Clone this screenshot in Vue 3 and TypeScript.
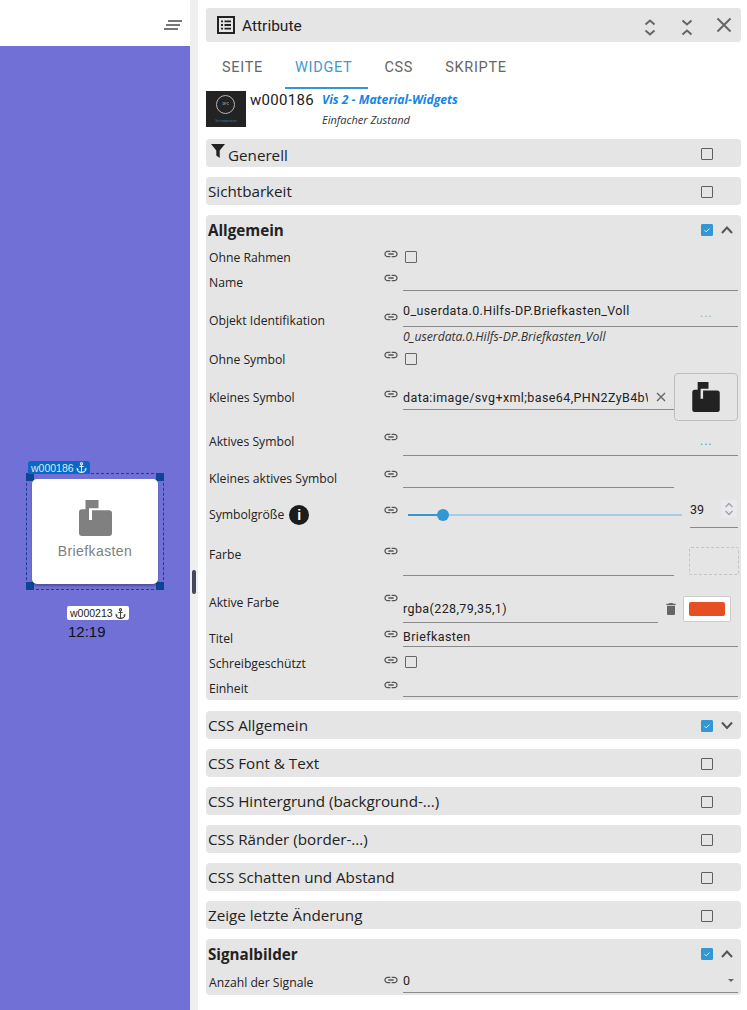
<script setup lang="ts">
interface Row {
  label: string
  kind: 'check' | 'text' | 'slider'
  h: number
  lt: number
  it: number
  fh?: number
  cbt?: number
  value?: string
  info?: boolean
  extra?: string
}
const rows: Row[] = [
  { label: 'Ohne Rahmen', kind: 'check', h: 25, lt: 4, it: 1, cbt: 6 },
  { label: 'Name', kind: 'text', h: 24, lt: 4, it: 0, fh: 21 },
  { label: 'Objekt Identifikation', kind: 'text', h: 52, lt: 18, it: 15, fh: 33, value: '0_userdata.0.Hilfs-DP.Briefkasten_Voll', extra: 'obj' },
  { label: 'Ohne Symbol', kind: 'check', h: 26, lt: 5, it: 1, cbt: 7 },
  { label: 'Kleines Symbol', kind: 'text', h: 50, lt: 17, it: 14, fh: 38, value: 'data:image/svg+xml;base64,PHN2ZyB4bW', extra: 'icon' },
  { label: 'Aktives Symbol', kind: 'text', h: 38, lt: 11, it: 7, fh: 34, extra: 'dotsrow' },
  { label: 'Kleines aktives Symbol', kind: 'text', h: 37, lt: 10, it: 6, fh: 28, extra: 'short' },
  { label: 'Symbolgröße', kind: 'slider', h: 35, lt: 9, it: 5, info: true },
  { label: 'Farbe', kind: 'text', h: 48, lt: 14, it: 11, fh: 44, extra: 'color' },
  { label: 'Aktive Farbe', kind: 'text', h: 45, lt: 14, it: 10, fh: 43, value: 'rgba(228,79,35,1)', extra: 'activecolor' },
  { label: 'Titel', kind: 'text', h: 25, lt: 5, it: 1, fh: 22, value: 'Briefkasten', extra: 'title' },
  { label: 'Schreibgeschützt', kind: 'check', h: 25, lt: 5, it: 2, cbt: 6 },
  { label: 'Einheit', kind: 'text', h: 25, lt: 5, it: 2, fh: 22 }
]
const tabs = ['SEITE', 'WIDGET', 'CSS', 'SKRIPTE']
const linkPath = 'M3.9 12c0-1.71 1.39-3.1 3.1-3.1h4V7H7c-2.76 0-5 2.24-5 5s2.24 5 5 5h4v-1.9H7c-1.71 0-3.1-1.39-3.1-3.1zM8 13h8v-2H8v2zm9-6h-4v1.9h4c1.71 0 3.1 1.39 3.1 3.1s-1.39 3.1-3.1 3.1h-4V17h4c2.76 0 5-2.24 5-5s-2.24-5-5-5z'
const anchorPath = 'M17 15l1.55 1.55c-.96 1.69-3.33 3.04-5.55 3.37V11h3V9h-3V7.82C14.16 7.4 15 6.3 15 5c0-1.65-1.35-3-3-3S9 3.35 9 5c0 1.3.84 2.4 2 2.82V9H8v2h3v8.92c-2.22-.33-4.59-1.68-5.55-3.37L7 15l-4-3v3c0 3.88 4.92 7 9 7s9-3.12 9-7v-3l-4 3zM12 4c.55 0 1 .45 1 1s-.45 1-1 1-1-.45-1-1 .45-1 1-1z'
const flag = 'M6.5 0H19.5V8.2H10V10H6.5Z'
const body = 'M3 9.300H10V20H13V10.200H30a3 3 0 0 1 3 3V33a3 3 0 0 1-3 3H3a3 3 0 0 1-3-3V12.300a3 3 0 0 1 3-3Z'
function rowStyle(r: Row) {
  return {
    height: `${r.h}px`,
    '--lt': `${r.lt}px`,
    '--it': `${r.it}px`,
    '--fh': `${r.fh ?? 0}px`,
    '--cbt': `${r.cbt ?? 6}px`
  }
}
</script>

<template>
  <div class="app">
    <aside class="left">
      <div class="toolbar">
        <svg class="sort" width="18" height="12" viewBox="0 0 18 12"><path d="M4 0h14v2H4zM2 4h14v2H2zM0 8h14v2H0z" fill="#777" /></svg>
      </div>
      <div class="canvas">
        <div class="widget-frame">
          <i class="handle tl"></i><i class="handle tr"></i><i class="handle bl"></i><i class="handle br"></i>
          <div class="tag tag-blue">w000186 <svg width="13" height="13" viewBox="0 0 24 24"><path :d="anchorPath" fill="#dbe9fa" /></svg></div>
          <div class="card">
            <svg width="33" height="36" viewBox="0 0 33 36" fill="#808080"><path :d="flag" /><path :d="body" /></svg>
            <span>Briefkasten</span>
          </div>
        </div>
        <div class="tag tag-white">w000213 <svg width="13" height="13" viewBox="0 0 24 24"><path :d="anchorPath" fill="#444" /></svg></div>
        <div class="clock">12:19</div>
      </div>
    </aside>
    <div class="gutter"><i class="grip"></i></div>
    <main class="panel">
      <header class="title-bar">
        <svg width="18" height="18" viewBox="0 0 18 18" fill="none"><rect x="1" y="1" width="16" height="16" stroke="#222" stroke-width="2" /><path d="M4 4.500h2v1.800H4zM7.500 4.500H14v1.800H7.500zM4 8.100h2v1.800H4zM7.500 8.100H14v1.800H7.500zM4 11.700h2v1.800H4zM7.500 11.700H14v1.800H7.500z" fill="#222" /></svg>
        <span class="title-text">Attribute</span>
        <svg class="tb tb1" width="14" height="18" viewBox="0 0 14 18" fill="none" stroke="#666" stroke-width="2"><path d="M2.500 5.500L7 1.500l4.500 4M2.500 11.500L7 15.500l4.500-4" /></svg>
        <svg class="tb tb2" width="14" height="18" viewBox="0 0 14 18" fill="none" stroke="#666" stroke-width="2"><path d="M2.500 1.500L7 5.500l4.500-4M2.500 15.500L7 11.500l4.500 4" /></svg>
        <svg class="tb tb3" width="16" height="16" viewBox="0 0 16 16" fill="none" stroke="#666" stroke-width="2"><path d="M1.500 1.500l13 13M14.500 1.500l-13 13" /></svg>
      </header>
      <nav class="tabs">
        <span v-for="t in tabs" :key="t" class="tab" :class="{ current: t === 'WIDGET' }">{{ t }}</span>
      </nav>
      <div class="widget-info">
        <div class="thumb">
          <div class="ring">19°C</div>
          <div class="thumb-text">Set temperature</div>
        </div>
        <div class="wid">w000186</div>
        <div class="wmeta">
          <div class="set">Vis 2 - Material-Widgets</div>
          <div class="sub">Einfacher Zustand</div>
        </div>
      </div>

      <section class="acc acc-closed">
        <svg class="filter" width="14" height="14" viewBox="0 0 14 14"><path d="M0 0h14L8.700 6.500V14L5.300 11.500V6.500z" fill="#222" /></svg>
        <span class="acc-title gen">Generell</span>
        <i class="cb"></i>
      </section>
      <section class="acc acc-closed"><span class="acc-title">Sichtbarkeit</span><i class="cb"></i></section>

      <section class="acc acc-open">
        <div class="acc-head">
          <span class="acc-title bold">Allgemein</span>
          <i class="cb on"><svg viewBox="0 0 12 12"><path d="M3 6.200l2 2 4-4" fill="none" stroke="#fff" stroke-width="1" /></svg></i>
          <svg class="chev" width="14" height="9" viewBox="0 0 14 9" fill="none" stroke="#555" stroke-width="2"><path d="M2 8l5-5.500 5 5.500" /></svg>
        </div>
        <div v-for="r in rows" :key="r.label" class="row" :style="rowStyle(r)">
          <div class="label">{{ r.label }}<span v-if="r.info" class="info">i</span></div>
          <svg class="link" width="16" height="16" viewBox="0 0 24 24"><path :d="linkPath" fill="#555" /></svg>
          <div class="val">
            <i v-if="r.kind === 'check'" class="cb small"></i>
            <template v-else-if="r.kind === 'slider'">
              <div class="slider"><i class="s-fill"></i><i class="s-thumb"></i></div>
              <div class="num"><span>39</span><div class="spin"><svg width="12" height="16" viewBox="0 0 12 16" fill="none" stroke="#a5a5ad" stroke-width="1.500"><path d="M2.500 6L6 2.500 9.500 6M2.500 10L6 13.500 9.500 10" /></svg></div></div>
            </template>
            <template v-else>
              <div class="field-wrap" :class="r.extra">
                <div class="field"><span class="ftext">{{ r.value }}</span></div>
                <span v-if="r.extra === 'obj'" class="dots muted">...</span>
                <span v-if="r.extra === 'dotsrow'" class="dots">...</span>
                <svg v-if="r.extra === 'icon'" class="clear" width="10" height="10" viewBox="0 0 10 10" fill="none" stroke="#666" stroke-width="1.400"><path d="M1 1l8 8M9 1l-8 8" /></svg>
                <div v-if="r.extra === 'obj'" class="hint">0_userdata.0.Hilfs-DP.Briefkasten_Voll</div>
              </div>
              <button v-if="r.extra === 'icon'" class="icon-btn"><svg width="28" height="30" viewBox="0 0 33 36" fill="#222"><path :d="flag" /><path :d="body" /></svg></button>
              <i v-if="r.extra === 'color'" class="swatch-empty"></i>
              <template v-if="r.extra === 'activecolor'">
                <svg class="trash" width="16" height="16" viewBox="0 0 24 24"><path d="M6 19c0 1.100.9 2 2 2h8c1.100 0 2-.9 2-2V7H6v12zM19 4h-3.500l-1-1h-5l-1 1H5v2h14V4z" fill="#666" /></svg>
                <i class="swatch"><b></b></i>
              </template>
            </template>
          </div>
        </div>
      </section>

      <section class="acc acc-closed after"><span class="acc-title">CSS Allgemein</span><i class="cb on"><svg viewBox="0 0 12 12"><path d="M3 6.200l2 2 4-4" fill="none" stroke="#fff" stroke-width="1" /></svg></i><svg class="chev" width="14" height="9" viewBox="0 0 14 9" fill="none" stroke="#555" stroke-width="2"><path d="M2 1.500l5 5.500 5-5.500" /></svg></section>
      <section class="acc acc-closed"><span class="acc-title">CSS Font &amp; Text</span><i class="cb"></i></section>
      <section class="acc acc-closed"><span class="acc-title">CSS Hintergrund (background-...)</span><i class="cb"></i></section>
      <section class="acc acc-closed"><span class="acc-title">CSS Ränder (border-...)</span><i class="cb"></i></section>
      <section class="acc acc-closed"><span class="acc-title">CSS Schatten und Abstand</span><i class="cb"></i></section>
      <section class="acc acc-closed"><span class="acc-title">Zeige letzte Änderung</span><i class="cb"></i></section>

      <section class="acc acc-open signal">
        <div class="acc-head">
          <span class="acc-title bold">Signalbilder</span>
          <i class="cb on"><svg viewBox="0 0 12 12"><path d="M3 6.200l2 2 4-4" fill="none" stroke="#fff" stroke-width="1" /></svg></i>
          <svg class="chev" width="14" height="9" viewBox="0 0 14 9" fill="none" stroke="#555" stroke-width="2"><path d="M2 8l5-5.500 5 5.500" /></svg>
        </div>
        <div class="row sig">
          <div class="label">Anzahl der Signale</div>
          <svg class="link" width="16" height="16" viewBox="0 0 24 24"><path :d="linkPath" fill="#555" /></svg>
          <div class="val"><div class="field-wrap"><div class="field select"><span class="ftext">0</span><i class="caret"></i></div></div></div>
        </div>
      </section>
    </main>
  </div>
</template>

<style>
html, body { margin: 0; background: #fff; }
</style>

<style scoped>
.app { display: flex; width: 747px; height: 1010px; overflow: hidden; background: #fff; font-family: "Open Sans", sans-serif; color: #222; }
.left { width: 190px; flex: none; display: flex; flex-direction: column; }
.toolbar { height: 46px; display: flex; justify-content: flex-end; align-items: flex-start; background: #fff; }
.sort { margin: 20px 8px 0 0; }
.canvas { flex: 1; position: relative; background: #7070d6; }
.widget-frame { position: absolute; left: 26px; top: 427px; width: 136px; height: 115px; border: 1px dashed #14408f; }
.handle { position: absolute; width: 8px; height: 8px; background: #0d4593; }
.tl { left: -1px; top: -1px; } .tr { right: -1px; top: -1px; } .bl { left: -1px; bottom: -1px; } .br { right: -1px; bottom: -1px; }
.tag { position: absolute; height: 14px; display: flex; align-items: center; gap: 1px; font: 10.500px/14px "Liberation Sans", sans-serif; white-space: nowrap; }
.tag svg { flex: none; }
.tag-blue { left: 1px; top: -13px; height: 13px; padding: 0 1px 0 3px; width: 58px; background: #0a68c4; color: #dbe9fa; border-radius: 3px 3px 0 0; }
.tag-white { left: 67px; top: 560px; width: 59px; padding: 0 0 0 3px; background: #fff; color: #222; border-radius: 2px; }
.card { position: absolute; left: 5px; top: 5px; width: 126px; height: 105px; background: #fff; border-radius: 5px; box-shadow: 0 2px 2px rgba(0,0,0,.28); display: flex; flex-direction: column; align-items: center; padding-top: 21px; box-sizing: border-box; }
.card span { margin-top: 5px; font: 14px/20px "Liberation Sans", sans-serif; letter-spacing: .4px; color: #808080; }
.clock { position: absolute; left: 68px; top: 576px; font: 15px/19px "Liberation Sans", sans-serif; color: #111; }
.gutter { width: 8px; flex: none; position: relative; background: #eef0f0; }
.grip { position: absolute; left: 2px; top: 570px; width: 4px; height: 24px; border-radius: 2px; background: #46465c; }
.panel { flex: 1; padding: 8px 6px 0 8px; display: flex; flex-direction: column; min-width: 0; }
.title-bar { height: 34px; flex: none; background: #e5e5e5; border-radius: 3px; display: flex; align-items: center; padding-left: 11px; position: relative; }
.title-text { margin-left: 7px; font: 15.500px/20px Roboto, sans-serif; position: relative; top: 1px; }
.tb { position: absolute; }
.tb1 { left: 437px; top: 11px; } .tb2 { left: 474px; top: 11px; } .tb3 { left: 510px; top: 9px; }
.tabs { height: 47px; flex: none; display: flex; }
.tab { height: 47px; box-sizing: border-box; padding: 17px 16px 0; font: 14.500px/18px Roboto, sans-serif; letter-spacing: .7px; color: #666; border-bottom: 2px solid transparent; }
.tab.current { color: #3c9ad2; border-bottom-color: #3297d3; padding-left: 10px; margin-left: 6px; }
.widget-info { height: 38px; flex: none; display: flex; margin-top: 2px; position: relative; }
.thumb { width: 40px; height: 36px; background: #232323; position: relative; }
.ring { position: absolute; left: 10px; top: 4px; width: 19px; height: 19px; box-sizing: border-box; border: 1.500px solid #b5b5b5; border-radius: 50%; font: 3px/16px "Liberation Sans", sans-serif; color: #ddd; text-align: center; }
.thumb-text { position: absolute; left: 0; right: 0; top: 28px; text-align: center; font: 3px/5px "Liberation Sans", sans-serif; color: #3a78c8; white-space: nowrap; }
.wid { margin-left: 4px; font: 15px/18px Roboto, sans-serif; letter-spacing: .3px; }
.wmeta { margin-left: 8px; padding-top: 1px; }
.set { font: italic 700 12.200px/16px "Open Sans", sans-serif; color: #1385e6; }
.sub { margin-top: 4px; font: italic 11px/16px "Open Sans", sans-serif; color: #333; }
.acc { flex: none; background: #e5e5e5; border-radius: 4px; position: relative; margin-top: 10px; }
.acc.after { margin-top: 11px; }
.acc-closed { height: 28px; display: flex; align-items: center; padding-left: 2px; }
.acc-title { font-size: 15.200px; line-height: 20px; color: #222; }
.acc-title.bold { font-weight: 700; }
.acc-title.gen { margin-left: 20px; position: relative; top: 2px; }
.filter { position: absolute; left: 5px; top: 5px; }
.cb { position: absolute; left: 495px; top: 9px; width: 12px; height: 12px; border: 1.500px solid #5f5f5f; border-radius: 1px; box-sizing: border-box; display: block; }
.cb.on { background: #3297d3; border-color: #3297d3; }
.cb.on svg { display: block; width: 100%; height: 100%; }
.cb.small { position: static; border-color: #666; margin: var(--cbt) 0 0 2px; }
.chev { position: absolute; left: 514px; top: 10px; }
.acc-head { height: 30px; display: flex; align-items: center; padding-left: 2px; }
.row { display: grid; grid-template-columns: 175px 19px 1fr; padding-left: 3px; position: relative; }
.label { font-size: 12.200px; line-height: 16px; padding-top: calc(var(--lt) + 1px); color: #222; white-space: nowrap; display: flex; align-items: center; height: 16px; }
.info { width: 20px; height: 20px; border-radius: 50%; background: #1c1c1c; color: #fff; font: 700 14px/20px "Liberation Sans", sans-serif; text-align: center; margin-left: 5px; flex: none; }
.link { margin: var(--it) 0 0 -1px; }
.val { display: flex; min-width: 0; padding-right: 3px; position: relative; }
.field-wrap { flex: 1; min-width: 0; position: relative; }
.field { height: var(--fh); border-bottom: 1px solid #8a8a8a; box-sizing: border-box; display: flex; align-items: flex-end; overflow: hidden; white-space: nowrap; }
.ftext { font: 12.500px/18px Roboto, sans-serif; letter-spacing: .4px; color: #222; padding-bottom: 1px; overflow: hidden; }
.icon { flex: none; width: 271px; }
.icon .field { width: 271px; padding-right: 26px; }
.icon .ftext { padding-bottom: 2px; }
.activecolor .ftext { padding-bottom: 4px; }
.title .ftext { padding-bottom: 0; }
.clear { position: absolute; left: 253px; top: 20px; }
.icon-btn { flex: none; width: 64px; height: 48px; margin-top: 1px; background: #e5e5e5; border: 1px solid #bdbdbd; border-radius: 4px; padding: 0; display: flex; align-items: center; justify-content: center; }
.dots { position: absolute; left: 297px; top: 11px; font: 12px/16px Roboto, sans-serif; letter-spacing: 1px; color: #3c9ad2; }
.dots.muted { color: #8fb3cc; }
.hint { font: italic 12.200px/16px "Open Sans", sans-serif; color: #333; margin-top: 2px; white-space: nowrap; }
.short { padding-right: 64px; }
.color { padding-right: 64px; }
.activecolor { padding-right: 80px; }
.obj .field { align-items: center; }
.obj .ftext { padding-bottom: 0; margin-top: 2px; }
.swatch-empty { position: absolute; right: 2px; top: 15px; width: 48px; height: 26px; border: 1px dashed #c4c4c4; border-radius: 2px; }
.trash { position: absolute; left: 260px; top: 21px; }
.swatch { position: absolute; left: 280px; top: 16px; width: 46px; height: 24px; background: #fff; border: 1px solid #ccc; border-radius: 2px; display: flex; align-items: center; justify-content: center; }
.swatch b { width: 36px; height: 14px; background: #e54f23; border-radius: 2px; }
.slider { width: 274px; height: 2px; position: relative; margin: 17px 0 0 5px; background: #a3cde4; }
.s-fill { position: absolute; left: 0; top: 0; width: 35px; height: 2px; background: #3297d3; }
.s-thumb { position: absolute; left: 29px; top: -5px; width: 12px; height: 12px; border-radius: 50%; background: #3297d3; }
.num { position: absolute; left: 287px; top: 0; width: 48px; height: 30px; border-bottom: 1px solid #8a8a8a; }
.num span { font: 12.500px/24px Roboto, sans-serif; position: absolute; left: 0; top: 1px; }
.spin { position: absolute; right: 1px; top: 3px; width: 16px; height: 18px; background: #e9e9ee; display: flex; align-items: center; justify-content: center; }
.signal { height: 56px; }
.sig { height: 26px; margin-top: -1px; --lt: 6px; --it: 4px; --fh: 25px; }
.sig .ftext { padding-bottom: 2px; }
.select { position: relative; }
.caret { position: absolute; right: 4px; top: 11px; width: 0; height: 0; border-left: 3px solid transparent; border-right: 3px solid transparent; border-top: 3px solid #666; }
</style>
